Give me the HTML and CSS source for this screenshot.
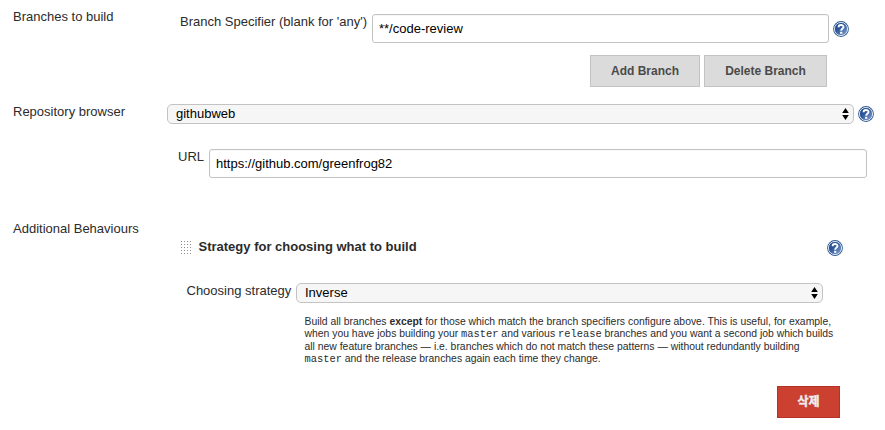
FILE: index.html
```html
<!DOCTYPE html>
<html lang="ko">
<head>
<meta charset="utf-8">
<title>Branch configuration</title>
<link rel="stylesheet" href="styles.css">
</head>
<body>
<svg class="defs" width="0" height="0" aria-hidden="true">
  <defs>
    <linearGradient id="blue" x1="0" y1="0" x2="1" y2="1">
      <stop offset="0" stop-color="#204a87"/><stop offset=".4" stop-color="#2c569a"/><stop offset="1" stop-color="#8aa8d4"/>
    </linearGradient>
    <symbol id="help" viewBox="0 0 16 16">
      <circle cx="8" cy="8" r="7.9" fill="#33598f"/>
      <circle cx="8" cy="8" r="6.6" fill="url(#blue)" stroke="#e9eff8" stroke-width=".9"/>
      <path d="M5.6 6.2C5.6 3.4 10.5 3.3 10.5 5.9C10.5 7.6 8.2 7.5 8.2 9.7" fill="none" stroke="#fff" stroke-width="1.9"/>
      <rect x="7.1" y="10.8" width="2.2" height="2" fill="#fff"/>
    </symbol>
    <symbol id="arrows" viewBox="0 0 7 12">
      <path d="M3.5 0L6.8 5H.2zM3.5 12L.2 7H6.8z" fill="#000"/>
    </symbol>
  </defs>
</svg>
<main class="form">
  <section class="row branches">
    <div class="name">Branches to build</div>
    <div class="setting">
      <div class="field specifier">
        <label>Branch Specifier (blank for 'any')</label>
        <div class="input">**/code-review</div>
        <svg class="help"><use href="#help"/></svg>
      </div>
      <div class="actions">
        <button class="btn add">Add Branch</button>
        <button class="btn delete">Delete Branch</button>
      </div>
    </div>
  </section>
  <section class="row browser">
    <div class="name">Repository browser</div>
    <div class="setting">
      <div class="field">
        <div class="select"><span>githubweb</span><svg class="arrows"><use href="#arrows"/></svg></div>
        <svg class="help"><use href="#help"/></svg>
      </div>
      <div class="field url">
        <label>URL</label>
        <div class="input">https://github.com/greenfrog82</div>
      </div>
    </div>
  </section>
  <section class="row behaviours">
    <div class="name">Additional Behaviours</div>
    <div class="setting">
      <header class="heading">
        <i class="grip"></i>
        <h2>Strategy for choosing what to build</h2>
        <svg class="help"><use href="#help"/></svg>
      </header>
      <div class="field strategy">
        <label>Choosing strategy</label>
        <div class="select"><span>Inverse</span><svg class="arrows"><use href="#arrows"/></svg></div>
      </div>
      <div class="description">
        <div>Build all branches <b>except</b> for those which match the branch specifiers configure above. This is useful, for example,</div>
        <div>when you have jobs building your <code>master</code> and various <code>release</code> branches and you want a second job which builds</div>
        <div>all new feature branches — i.e. branches which do not match these patterns — without redundantly building</div>
        <div><code>master</code> and the release branches again each time they change.</div>
      </div>
      <button class="btn danger">삭제</button>
    </div>
  </section>
</main>
</body>
</html>
```
FILE: styles.css
```css
* { box-sizing: border-box; }
body {
  margin: 0;
  background: #fff;
  color: #2b2b2b;
  font: 13px/16px "Liberation Sans", "Noto Sans CJK KR", sans-serif;
  white-space: nowrap;
}
svg { display: block; flex: none; }
.defs { position: absolute; }
.form { height: 430px; overflow: hidden; }
.row { display: flex; }
.name { width: 167px; padding-left: 13px; flex: none; }
.setting { flex: 1; }
.field { display: flex; }
.branches { height: 104px; padding-top: 14px; }
.branches .name { margin-top: -5px; }
label { flex: none; }
.specifier label { width: 205px; padding-left: 13px; }
.input {
  height: 29px;
  padding: 6px;
  color: #000;
  border: 1px solid #c3c3c3;
  border-radius: 3px;
  box-shadow: inset 0 1px 1px #00000009;
}
.specifier .input { width: 457px; }
.help { width: 16px; height: 16px; }
.specifier .help { margin: 7px 0 0 4px; }
.actions { display: flex; gap: 4px; margin: 12px 0 0 423px; }
.btn {
  height: 32px;
  padding: 0;
  border: 1px solid #c3c3c3;
  background: #dbdbdb;
  color: #4a4a4a;
  font: bold 12px/16px "Liberation Sans", "Noto Sans CJK KR", sans-serif;
}
.add { width: 110px; }
.delete { width: 123px; }
.browser { height: 116px; }
.select {
  display: flex;
  justify-content: space-between;
  width: 687px;
  height: 20px;
  padding: 1px 4px 0 8px;
  color: #000;
  background: #f6f6f6;
  border: 1px solid #c3c3c3;
  border-radius: 5px;
}
.arrows { width: 7px; height: 12px; margin-top: 2px; }
.browser .help { margin: 2px 0 0 4px; }
.url { margin-top: 25px; }
.url label { width: 42px; padding-left: 11px; }
.url .input { width: 658px; }
.behaviours .name { padding-top: 1px; }
.heading { display: flex; height: 16px; margin-top: 20px; }
.grip {
  width: 12px;
  height: 15px;
  margin: 0 6.5px 0 13px;
  background: radial-gradient(circle at 1.5px 1.5px, #8c8c8c 0, #aaa .6px, transparent 1px) 0 0 / 3px 3px;
}
h2 { width: 628.5px; margin: -1px 0 0; font-size: 13px; line-height: 16px; }
.strategy { margin-top: 27px; }
.strategy label { width: 129px; padding-left: 19.5px; }
.strategy .select { width: 527px; }
.description {
  margin: 13px 0 0 137.5px;
  font-size: 10.4px;
  line-height: 12.3px;
}
.description div { height: 12.3px; }
code { font: 10.4px/12px "Liberation Mono", monospace; }
.danger {
  display: block;
  width: 63px;
  margin: 21px 0 0 610px;
  color: #eee;
  background: #cb4031;
  border-color: #b53225;
  -webkit-text-stroke: .4px #eee;
}
```
